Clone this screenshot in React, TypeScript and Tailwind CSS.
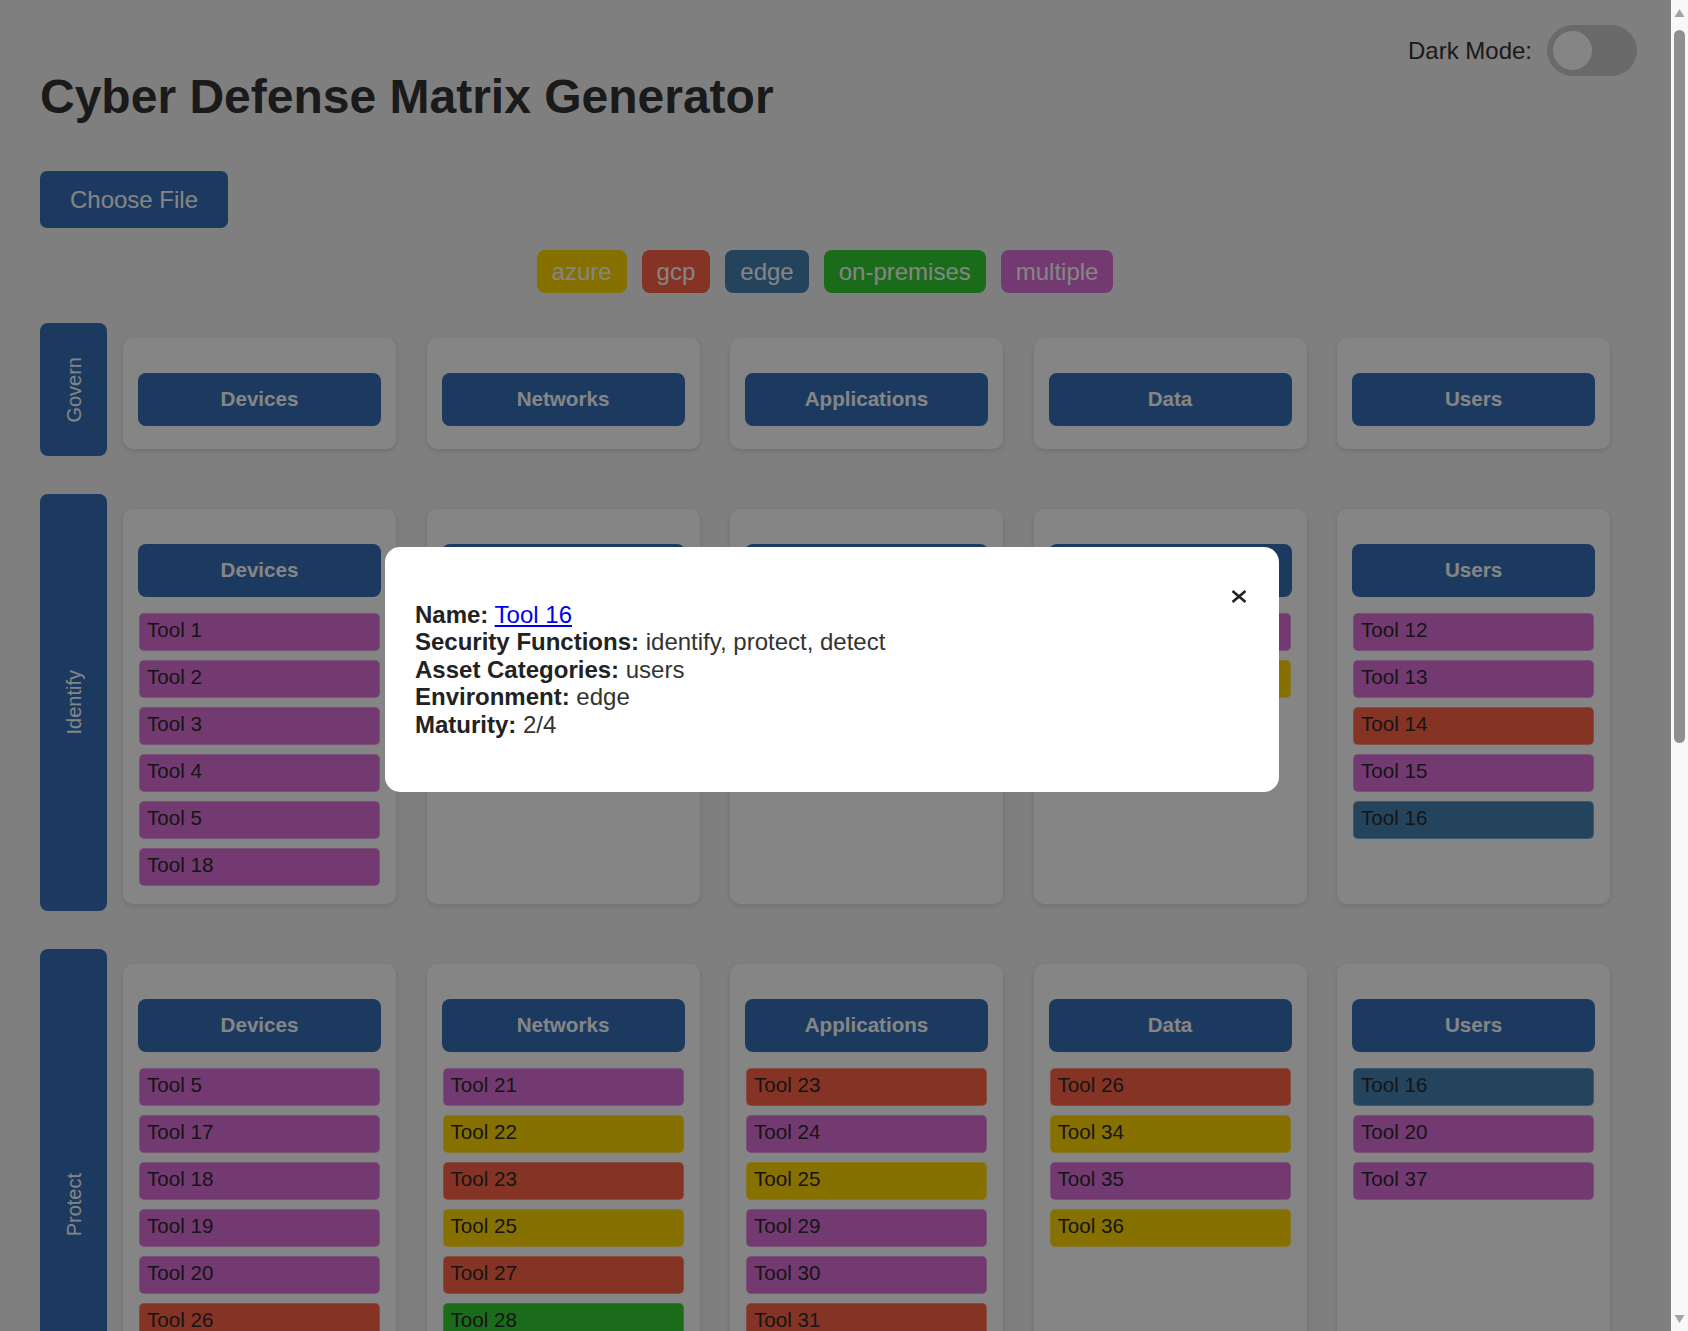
import React from "react";

type Tool = [string, string];

const envClass: Record<string, string> = {
  azure: "bg-[#ffd700]",
  gcp: "bg-[#ff6347]",
  edge: "bg-[#4682b4]",
  "on-premises": "bg-[#32cd32]",
  multiple: "bg-[#da70d6]",
};

const assets = ["Devices", "Networks", "Applications", "Data", "Users"];

const m = "multiple";

const matrix: { fn: string; cells: Tool[][] }[] = [
  { fn: "Govern", cells: [[], [], [], [], []] },
  {
    fn: "Identify",
    cells: [
      [["Tool 1", m], ["Tool 2", m], ["Tool 3", m], ["Tool 4", m], ["Tool 5", m], ["Tool 18", m]],
      [["Tool 6", m], ["Tool 7", "azure"], ["Tool 8", m]],
      [["Tool 9", m], ["Tool 10", "gcp"]],
      [["Tool 11", m], ["Tool 22", "azure"]],
      [["Tool 12", m], ["Tool 13", m], ["Tool 14", "gcp"], ["Tool 15", m], ["Tool 16", "edge"]],
    ],
  },
  {
    fn: "Protect",
    cells: [
      [["Tool 5", m], ["Tool 17", m], ["Tool 18", m], ["Tool 19", m], ["Tool 20", m], ["Tool 26", "gcp"], ["Tool 27", "gcp"], ["Tool 33", m]],
      [["Tool 21", m], ["Tool 22", "azure"], ["Tool 23", "gcp"], ["Tool 25", "azure"], ["Tool 27", "gcp"], ["Tool 28", "on-premises"], ["Tool 32", m]],
      [["Tool 23", "gcp"], ["Tool 24", m], ["Tool 25", "azure"], ["Tool 29", m], ["Tool 30", m], ["Tool 31", "gcp"]],
      [["Tool 26", "gcp"], ["Tool 34", "azure"], ["Tool 35", m], ["Tool 36", "azure"]],
      [["Tool 16", "edge"], ["Tool 20", m], ["Tool 37", m]],
    ],
  },
  {
    fn: "Detect",
    cells: [
      [["Tool 16", "edge"], ["Tool 38", m], ["Tool 39", "azure"], ["Tool 40", m]],
      [["Tool 41", "gcp"], ["Tool 42", m]],
      [["Tool 43", m]],
      [["Tool 44", "azure"], ["Tool 45", m]],
      [["Tool 16", "edge"]],
    ],
  },
  {
    fn: "Respond",
    cells: [
      [["Tool 46", m], ["Tool 47", "gcp"], ["Tool 48", m]],
      [["Tool 49", m]],
      [["Tool 50", "azure"]],
      [["Tool 51", m]],
      [["Tool 52", m]],
    ],
  },
  {
    fn: "Recover",
    cells: [
      [["Tool 53", m], ["Tool 54", "on-premises"]],
      [["Tool 55", m]],
      [["Tool 56", "gcp"], ["Tool 57", m], ["Tool 58", m]],
      [["Tool 59", m]],
      [["Tool 60", "azure"]],
    ],
  },
];

const Cell = ({ asset, tools }: { asset: string; tools: Tool[] }) => (
  <div className="bg-white rounded-[10px] p-[15px] shadow-[0_2px_6px_rgba(0,0,0,0.12)]">
    <div className="mt-[20px] h-[53px] rounded-[8px] bg-[#3670b9] flex items-center justify-center text-white text-[20.6px] font-bold">
      {asset}
    </div>
    <div className="pt-[8px]">
      {tools.length > 0 && (
        <div className="pt-[8px] pb-[3px] flex flex-col gap-[9px]">
          {tools.map(([name, env]) => (
            <div
              key={name}
              className={`${envClass[env]} mx-[1px] h-[38px] rounded-[5px] border border-white/30 px-[7px] pb-[3px] flex items-center text-[20.6px] text-[#2a2a2a]`}
            >
              {name}
            </div>
          ))}
        </div>
      )}
    </div>
  </div>
);

// browser scrollbar as it shows in the capture
const Scrollbar = () => (
  <div className="w-[17px] h-screen bg-[#f8f8f8] flex flex-col items-center">
    <svg width="17" height="24" viewBox="0 0 17 24" className="shrink-0">
      <polygon points="3.5,17 8.5,9 13.5,17" fill="#a3a3a3" />
    </svg>
    <div className="mt-[6px] w-[11px] h-[713px] rounded-full bg-[#8f8f8f]" />
    <div className="flex-1" />
    <svg width="17" height="20" viewBox="0 0 17 20" className="shrink-0">
      <polygon points="3.5,4 8.5,12 13.5,4" fill="#a3a3a3" />
    </svg>
  </div>
);

export default function App() {
  return (
    <div className="flex h-screen overflow-hidden font-['Liberation_Sans',Arial,sans-serif] text-[#333]">
      <div className="relative w-[1671px] h-screen overflow-hidden bg-[#f4f4f4]">
        <div className="px-[40px] pb-[40px]">
          <div className="flex justify-end items-center gap-[15px] -mr-[6px] pt-[25px]">
            <span className="text-[24px]">Dark Mode:</span>
            <div className="w-[90px] h-[51px] rounded-full bg-[#cccccc] flex items-center px-[6px]">
              <div className="w-[39px] h-[39px] rounded-full bg-white" />
            </div>
          </div>

          <div className="mr-[21px]">
            <h1 className="-mt-[7px] text-[48px] leading-[55px] font-bold">Cyber Defense Matrix Generator</h1>

            <div className="mt-[47px] w-[188px] h-[57px] rounded-[7px] bg-[#3670b9] text-white text-[24px] flex items-center justify-center">
              Choose File
            </div>

            <div className="mt-[22px] flex justify-center gap-[15px]">
              {Object.keys(envClass).map((env) => (
                <div
                  key={env}
                  className={`${envClass[env]} h-[43px] px-[15px] rounded-[8px] flex items-center text-white text-[24px]`}
                >
                  {env}
                </div>
              ))}
            </div>

            <div className="mt-[30px] flex flex-col gap-[38px]">
              {matrix.map((row) => (
                <div key={row.fn} className="flex gap-[16px]">
                  <div className="w-[67px] shrink-0 rounded-[8px] bg-[#3670b9] flex items-center justify-center">
                    <span className="[writing-mode:vertical-rl] rotate-180 text-[20px] text-white">{row.fn}</span>
                  </div>
                  <div className="flex-1 grid grid-cols-5 gap-[30.5px] pt-[15px] pb-[7px]">
                    {row.cells.map((tools, i) => (
                      <Cell key={assets[i]} asset={assets[i]} tools={tools} />
                    ))}
                  </div>
                </div>
              ))}
            </div>
          </div>
        </div>

        {/* tool details modal */}
        <div className="absolute inset-0 bg-black/[0.48] flex items-center justify-center">
          <div className="relative -ml-[7px] mt-[8px] w-[894px] bg-white rounded-[15px] p-[30px]">
            <svg
              className="absolute top-[43px] right-[32px]"
              width="16"
              height="13"
              viewBox="0 0 16 13"
              fill="none"
              stroke="#222"
              strokeWidth="2.6"
            >
              <line x1="1.5" y1="1" x2="14.5" y2="12" />
              <line x1="14.5" y1="1" x2="1.5" y2="12" />
            </svg>
            <div className="my-[24px] text-[24px] leading-[27.6px] text-[#333]">
              <div>
                <strong className="text-[#222]">Name:</strong>{" "}
                <a href="#" className="text-[#0000ee] underline">
                  Tool 16
                </a>
              </div>
              <div>
                <strong className="text-[#222]">Security Functions:</strong> identify, protect, detect
              </div>
              <div>
                <strong className="text-[#222]">Asset Categories:</strong> users
              </div>
              <div>
                <strong className="text-[#222]">Environment:</strong> edge
              </div>
              <div>
                <strong className="text-[#222]">Maturity:</strong> 2/4
              </div>
            </div>
          </div>
        </div>
      </div>
      <Scrollbar />
    </div>
  );
}
